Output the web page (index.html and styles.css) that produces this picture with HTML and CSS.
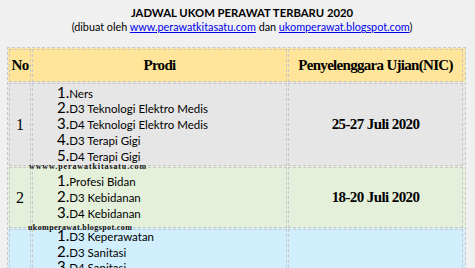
FILE: index.html
```html
<!DOCTYPE html>
<html>
<head>
<meta charset="utf-8">
<link rel="stylesheet" href="styles.css">
</head>
<body>
<div class="head">
  <div class="title">JADWAL UKOM PERAWAT TERBARU 2020</div>
  <div class="sub">(dibuat oleh <a href="#">www.perawatkitasatu.com</a> dan <a href="#">ukomperawat.blogspot.com</a>)</div>
</div>
<div class="tbl">
  <div class="row hdr">
    <div class="cell c1"><span class="th">No</span></div>
    <div class="cell c2"><span class="th">Prodi</span></div>
    <div class="cell c3"><span class="th">Penyelenggara Ujian(NIC)</span></div>
  </div>
  <div class="row gray">
    <div class="cell c1"><span class="no">1</span></div>
    <div class="cell c2">
      <ul class="list">
        <li><span class="n">1.</span><span class="t">Ners</span></li>
        <li><span class="n">2.</span><span class="t">D3 Teknologi Elektro Medis</span></li>
        <li><span class="n">3.</span><span class="t">D4 Teknologi Elektro Medis</span></li>
        <li><span class="n">4.</span><span class="t">D3 Terapi Gigi</span></li>
        <li><span class="n">5.</span><span class="t">D4 Terapi Gigi</span></li>
      </ul>
    </div>
    <div class="cell c3"><span class="date">25-27 Juli 2020</span></div>
  </div>
  <div class="row green">
    <div class="cell c1"><span class="no">2</span></div>
    <div class="cell c2">
      <ul class="list">
        <li><span class="n">1.</span><span class="t">Profesi Bidan</span></li>
        <li><span class="n">2.</span><span class="t">D3 Kebidanan</span></li>
        <li><span class="n">3.</span><span class="t">D4 Kebidanan</span></li>
      </ul>
    </div>
    <div class="cell c3"><span class="date">18-20 Juli 2020</span></div>
  </div>
  <div class="row blue">
    <div class="cell c1"><span class="no">3</span></div>
    <div class="cell c2">
      <ul class="list">
        <li><span class="n">1.</span><span class="t">D3 Keperawatan</span></li>
        <li><span class="n">2.</span><span class="t">D3 Sanitasi</span></li>
        <li><span class="n">3.</span><span class="t">D4 Sanitasi</span></li>
        <li><span class="n">4.</span><span class="t">D3 Gizi</span></li>
        <li><span class="n">5.</span><span class="t">D4 Gizi</span></li>
        <li><span class="n">6.</span><span class="t">Profesi Ners</span></li>
        <li><span class="n">7.</span><span class="t">D4 Keperawatan</span></li>
        <li><span class="n">8.</span><span class="t">D3 Farmasi</span></li>
      </ul>
    </div>
    <div class="cell c3"></div>
  </div>
  <div class="wm wm1">wwww.perawatkitasatu.com</div>
  <div class="wm wm2">ukomperawat.blogspot.com</div>
</div>
</body>
</html>
```

FILE: styles.css
```css
html, body {
  margin: 0;
  padding: 0;
  background: #f0f0f0;
}
body {
  font-family: "Lato", "Liberation Sans", sans-serif;
  color: #000;
}
.head {
  text-align: center;
  padding: 6px 0 0 9px;
  height: 47px;
  box-sizing: border-box;
}
.title {
  font-weight: bold;
  font-size: 11.3px;
  line-height: 14px;
}
.sub {
  font-size: 10.8px;
  line-height: 14px;
}
.sub a {
  color: #0000ee;
  text-decoration: underline;
}
.tbl {
  position: relative;
  margin-left: 7px;
  width: 459px;
  box-sizing: border-box;
  border: 1px dashed #c8c8c8;
}
.row {
  display: grid;
  grid-template-columns: 22px 255px 175px;
  column-gap: 1px;
  padding: 1px 1px 0 1px;
}
.row:last-of-type {
  padding-bottom: 1px;
}
.hdr { background: #ffe599; }
.gray { background: #e6e6e6; }
.green { background: #e5f0da; }
.blue { background: #d0eefb; }
.cell {
  border: 1px dashed #c8c8c8;
  display: flex;
  align-items: center;
  justify-content: center;
  box-sizing: border-box;
}
.hdr .cell { height: 33px; }
.gray .cell { height: 83px; }
.green .cell { height: 61px; }
.c2 { justify-content: flex-start; }
.hdr .c2 { justify-content: center; }
.th {
  font-family: "Liberation Serif", serif;
  font-weight: bold;
  font-size: 15px;
  letter-spacing: -0.7px;
}
.no {
  font-family: "Liberation Serif", serif;
  font-size: 16px;
}
.date {
  font-family: "Liberation Serif", serif;
  font-weight: bold;
  font-size: 15px;
  letter-spacing: -0.6px;
}
.list {
  list-style: none;
  margin: -3px 0 0 0;
  padding: 0 0 0 24px;
}
.list li {
  height: 15.7px;
  line-height: 15.7px;
  white-space: nowrap;
  overflow: visible;
}
.n {
  font-size: 15px;
  line-height: 14px;
}
.t {
  font-size: 11.5px;
  line-height: 14px;
}
.wm {
  position: absolute;
  font-family: "Liberation Serif", serif;
  font-size: 8px;
  font-weight: bold;
  line-height: 8px;
  color: #111;
}
.wm1 {
  left: 21px;
  top: 115px;
  letter-spacing: 0.9px;
}
.wm2 {
  left: 20px;
  top: 176px;
  letter-spacing: 0.4px;
}
```
